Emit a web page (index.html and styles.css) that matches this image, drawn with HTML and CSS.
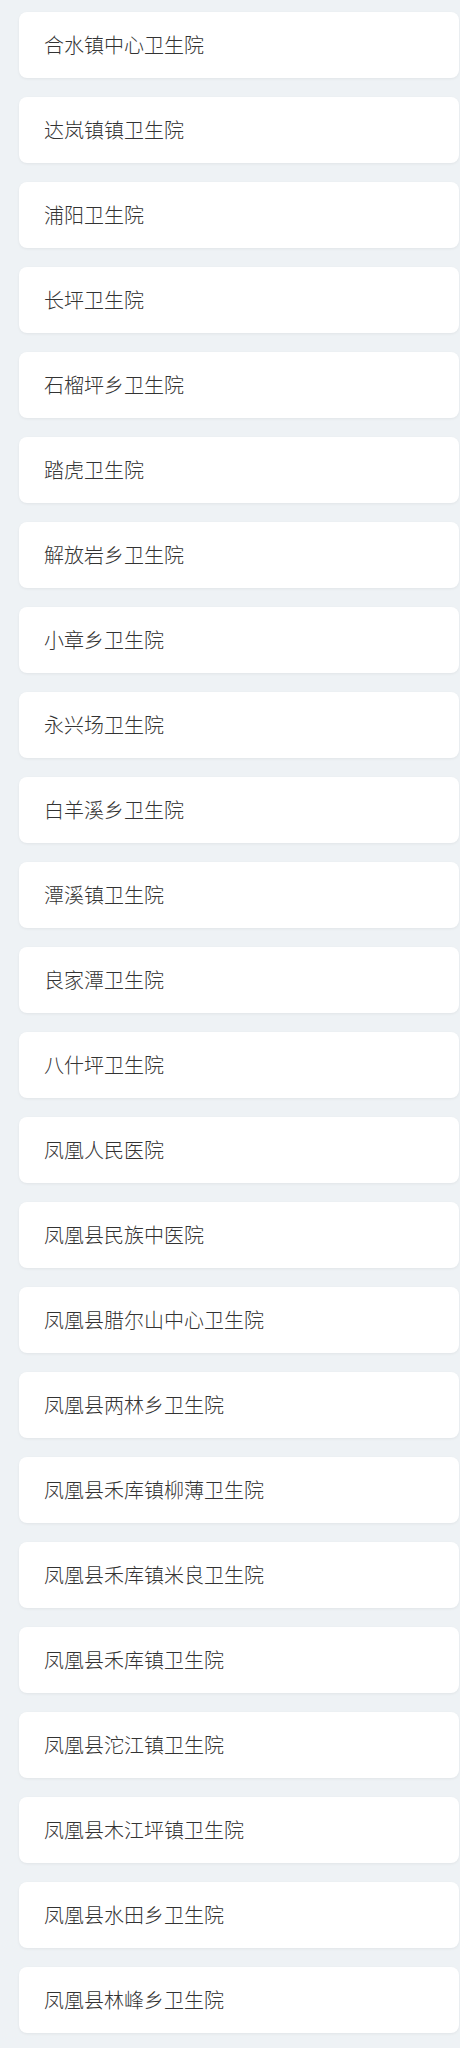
FILE: index.html
```html
<!DOCTYPE html>
<html lang="zh">
<head>
<meta charset="utf-8">
<link rel="stylesheet" href="styles.css">
</head>
<body>
<ul class="list">
<li class="card">合水镇中心卫生院</li>
<li class="card">达岚镇镇卫生院</li>
<li class="card">浦阳卫生院</li>
<li class="card">长坪卫生院</li>
<li class="card">石榴坪乡卫生院</li>
<li class="card">踏虎卫生院</li>
<li class="card">解放岩乡卫生院</li>
<li class="card">小章乡卫生院</li>
<li class="card">永兴场卫生院</li>
<li class="card">白羊溪乡卫生院</li>
<li class="card">潭溪镇卫生院</li>
<li class="card">良家潭卫生院</li>
<li class="card">八什坪卫生院</li>
<li class="card">凤凰人民医院</li>
<li class="card">凤凰县民族中医院</li>
<li class="card">凤凰县腊尔山中心卫生院</li>
<li class="card">凤凰县两林乡卫生院</li>
<li class="card">凤凰县禾库镇柳薄卫生院</li>
<li class="card">凤凰县禾库镇米良卫生院</li>
<li class="card">凤凰县禾库镇卫生院</li>
<li class="card">凤凰县沱江镇卫生院</li>
<li class="card">凤凰县木江坪镇卫生院</li>
<li class="card">凤凰县水田乡卫生院</li>
<li class="card">凤凰县林峰乡卫生院</li>
</ul>
</body>
</html>
```
FILE: styles.css
```css
html, body {
  margin: 0;
  padding: 0;
  background: #eef2f5;
}
body {
  font-family: "Noto Sans CJK SC", "Noto Sans", sans-serif;
  color: #333333;
}
.list {
  list-style: none;
  margin: 0;
  padding: 12px 1px 15px 19px;
  display: flex;
  flex-direction: column;
  gap: 19px;
}
.card {
  height: 66px;
  box-sizing: border-box;
  background: #ffffff;
  border-radius: 8px;
  box-shadow: 0 1px 3px rgba(0, 0, 0, 0.06);
  display: flex;
  align-items: center;
  padding-left: 25px;
  font-size: 20px;
  font-weight: 300;
  line-height: 1;
}
```
